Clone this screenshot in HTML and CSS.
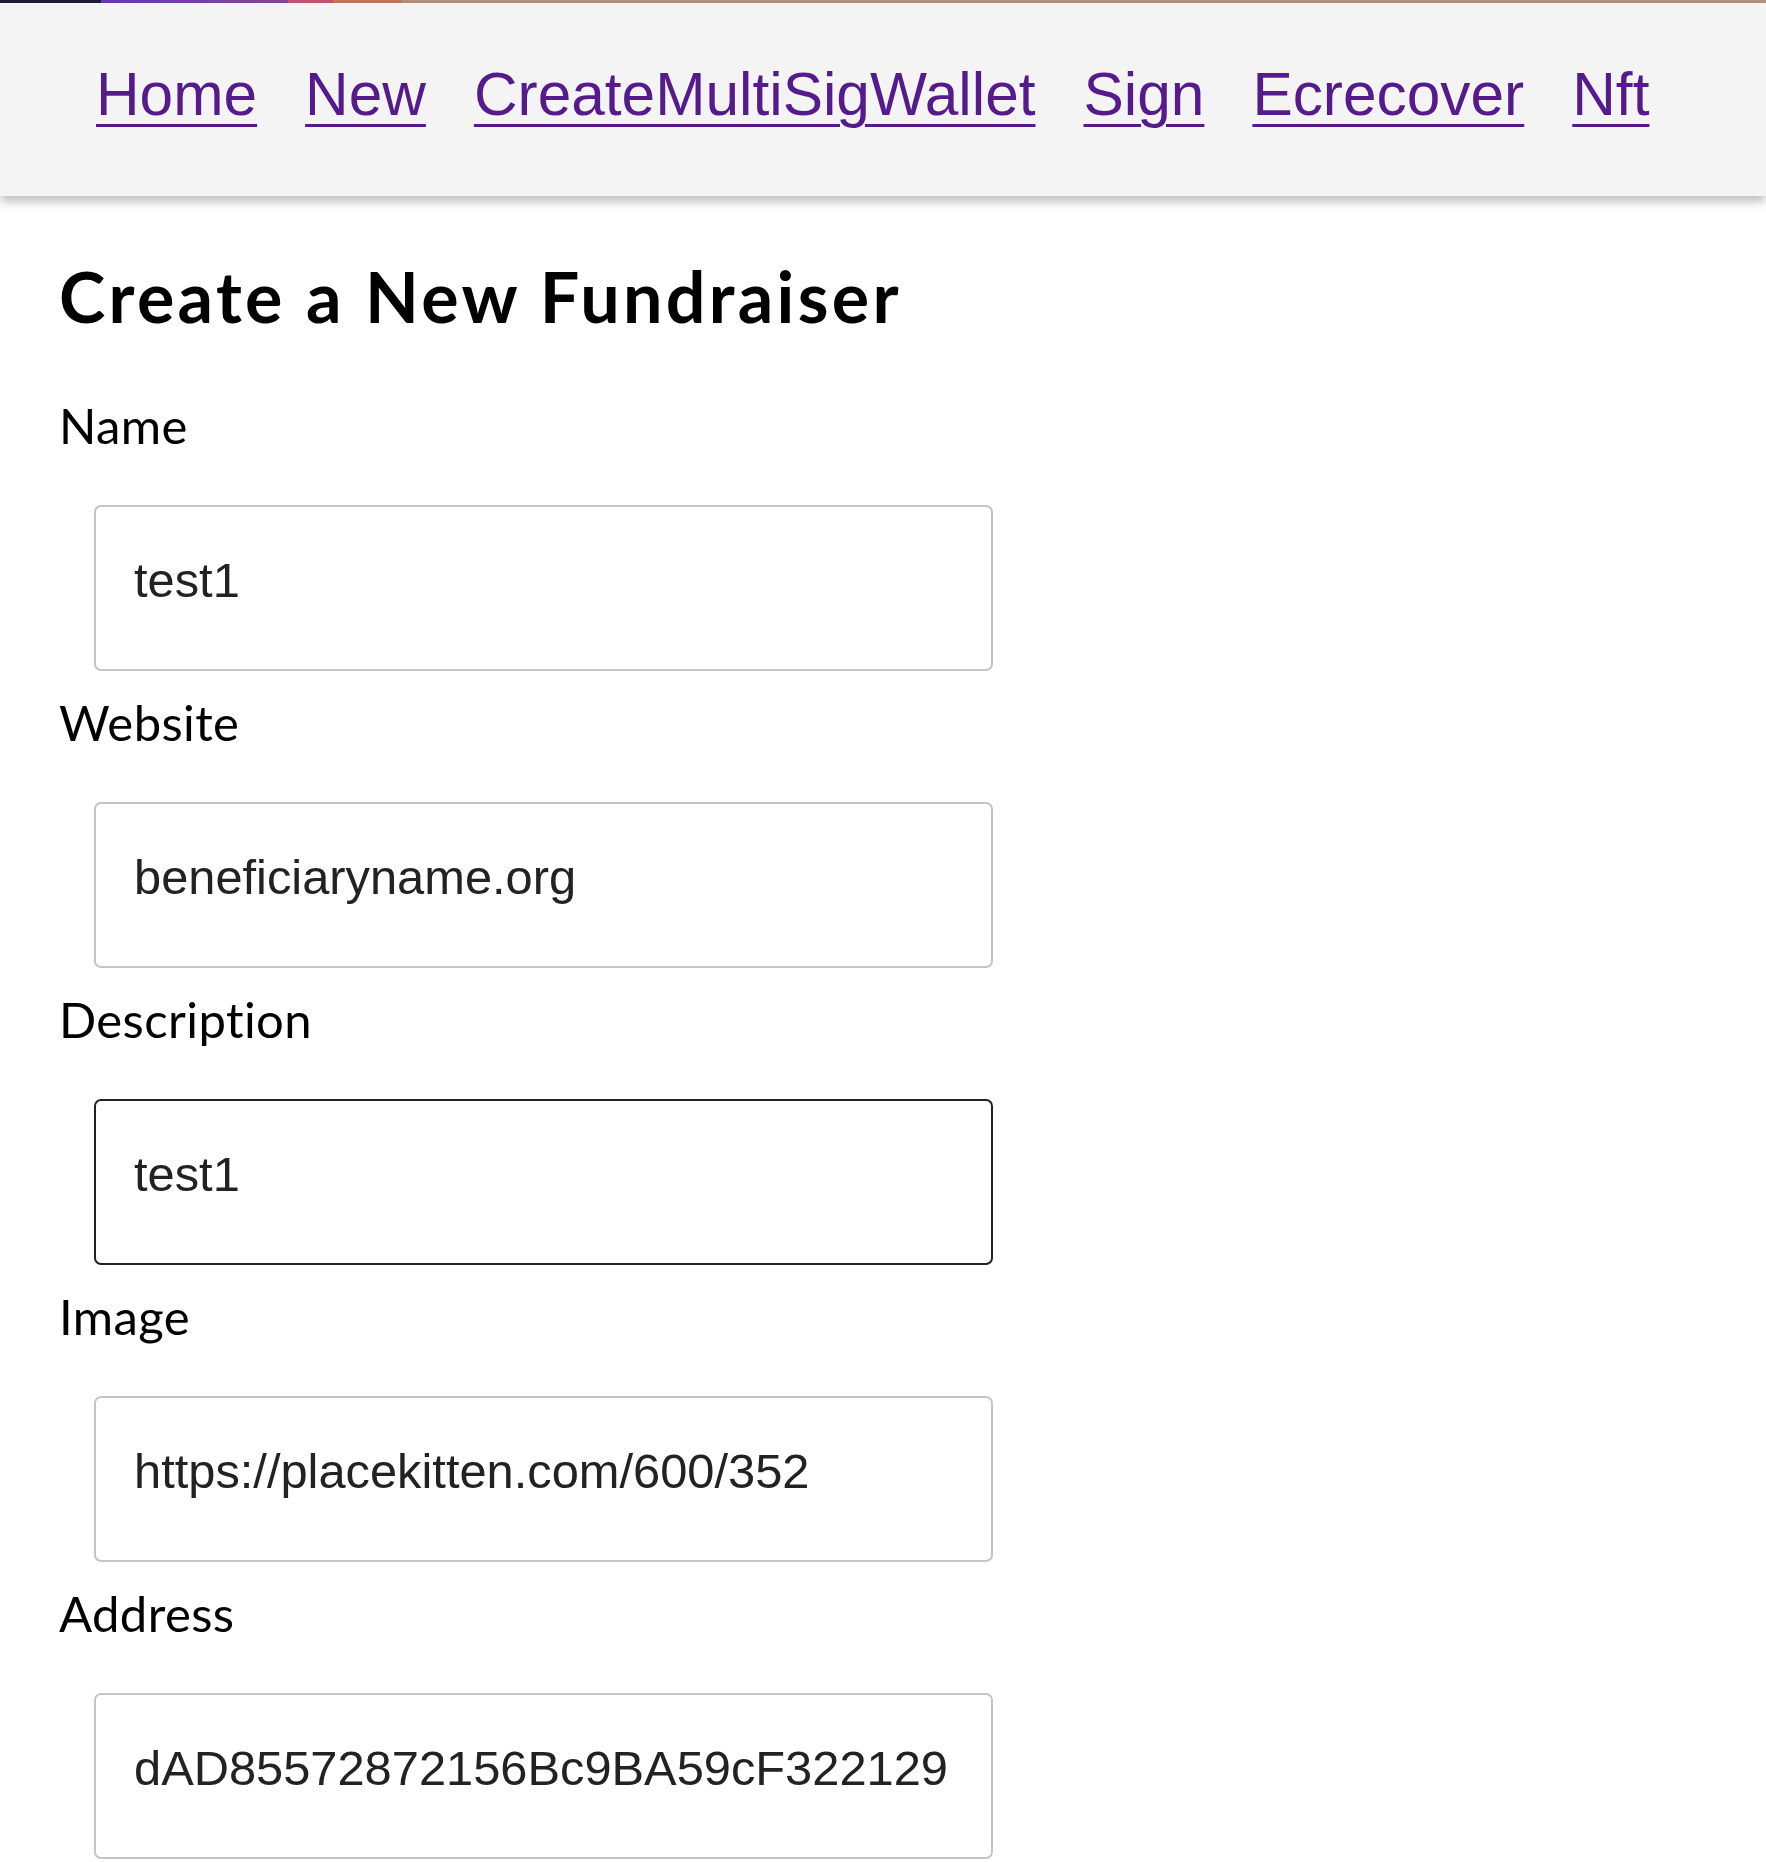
FILE: index.html
```html
<!DOCTYPE html>
<html lang="en">
<head>
<meta charset="utf-8">
<title>Create a New Fundraiser</title>
<link rel="stylesheet" href="styles.css">
</head>
<body>
<div class="progress"></div>
<nav class="nav">
  <a class="nav-link" href="#">Home</a>
  <a class="nav-link" href="#">New</a>
  <a class="nav-link" href="#">CreateMultiSigWallet</a>
  <a class="nav-link" href="#">Sign</a>
  <a class="nav-link" href="#">Ecrecover</a>
  <a class="nav-link" href="#">Nft</a>
</nav>
<main class="main">
  <h2 class="title">Create a New Fundraiser</h2>
  <form class="form">
    <label class="label">Name</label>
    <input class="input" type="text" value="test1">
    <label class="label">Website</label>
    <input class="input" type="text" value="beneficiaryname.org">
    <label class="label">Description</label>
    <input class="input input-focus" type="text" value="test1">
    <label class="label">Image</label>
    <input class="input" type="text" value="https://placekitten.com/600/352">
    <label class="label">Address</label>
    <input class="input" type="text" value="dAD85572872156Bc9BA59cF322129">
  </form>
</main>
</body>
</html>
```
FILE: styles.css
```css
html, body {
  margin: 0;
  padding: 0;
  background: #ffffff;
}

body {
  font-family: "Lato", "Open Sans", sans-serif;
  color: #000;
}

.progress {
  height: 3px;
  background: linear-gradient(to right,
    #1e1a3c 0, #1e1a3c 101px,
    #6a3ab6 101px, #8a4898 288px,
    #bf5872 288px, #bf5872 333px,
    #c07a58 333px, #c07a58 402px,
    #b8927e 402px, #b8927e 100%);
}

.nav {
  position: relative;
  z-index: 1;
  display: flex;
  gap: 48px;
  height: 193px;
  box-sizing: border-box;
  padding: 57px 0 0 96px;
  background: #f4f4f4;
  box-shadow: 0 5px 10px rgba(0, 0, 0, 0.28);
}

.nav-link {
  font-family: "Liberation Sans", Arial, sans-serif;
  font-size: 60.4px;
  line-height: 69px;
  color: #551a8b;
  text-decoration: underline;
  text-decoration-thickness: 3px;
  text-underline-offset: 9px;
}

.main {
  padding: 0 0 0 59px;
}

.title {
  margin: 60px 0 60px 0;
  font-size: 70px;
  line-height: 80px;
  font-weight: 700;
  letter-spacing: 3.3px;
}

.form {
  display: flex;
  flex-direction: column;
  align-items: flex-start;
}

.label {
  display: block;
  font-size: 49px;
  line-height: 58px;
  letter-spacing: 0.4px;
  margin-bottom: 51px;
}

.input {
  display: block;
  box-sizing: border-box;
  width: 899px;
  height: 166px;
  margin: 0 0 22px 35px;
  padding: 45px 38px 61px 38px;
  border: 2px solid #c4c4c4;
  border-radius: 7px;
  background: #fff;
  font-family: "Liberation Sans", Arial, sans-serif;
  font-size: 48.8px;
  line-height: 56px;
  color: #222;
  outline: none;
}

.input-focus {
  border-color: #222;
}
```
